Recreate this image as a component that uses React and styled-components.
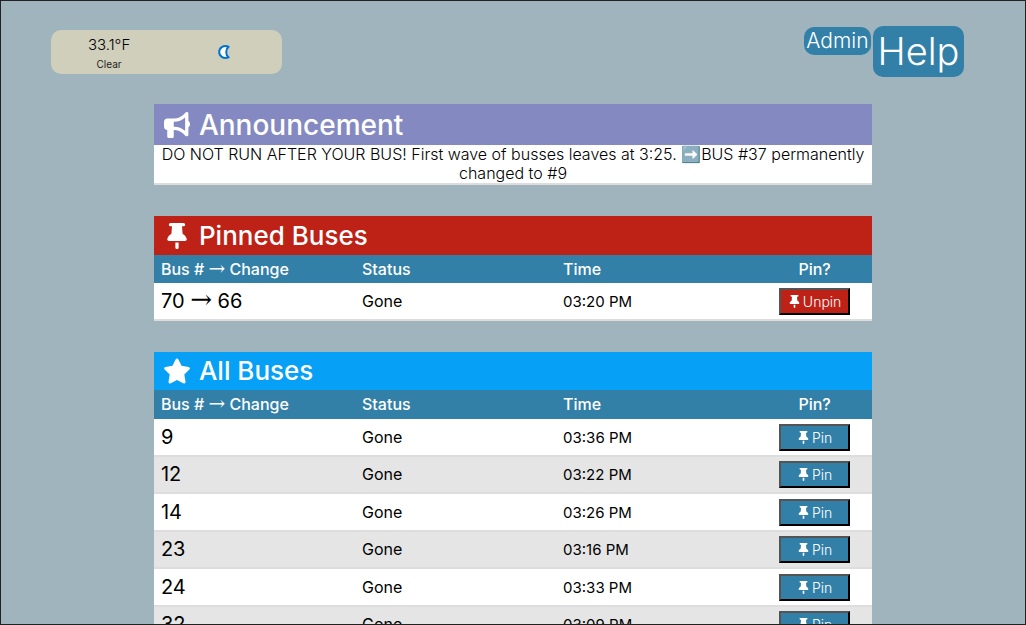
import React from "react";
import styled, { createGlobalStyle } from "styled-components";
import { FaBullhorn, FaThumbtack, FaStar } from "react-icons/fa6";

const steel = "#327fa8";
const red = "#be2116";

const GlobalStyle = createGlobalStyle`
  *, *::before, *::after { box-sizing: border-box; }
  body {
    margin: 0;
    background: #a0b4bd;
    color: #000;
    font-family: Inter, "Open Sans", sans-serif;
    font-size: 16px;
    line-height: 19px;
  }
`;

const Page = styled.div`
  height: 100vh;
  overflow-y: auto;
  scrollbar-width: none;
  outline: 1px solid #222;
  outline-offset: -1px;
`;

const TopBar = styled.header`
  display: flex;
  justify-content: space-between;
  align-items: flex-start;
  height: 79px;
  padding: 26px 6% 0 5%;
`;

const Weather = styled.section`
  display: grid;
  grid-template-columns: 1fr 1fr;
  align-items: center;
  justify-items: center;
  width: 26%;
  max-width: 231px;
  height: 44px;
  margin-top: 4px;
  border-radius: 10px;
  background: #d0cfbb;
`;

const Reading = styled.div`
  padding-top: 4px;
  text-align: center;
`;

const Temperature = styled.div`
  font-size: 15px;
  font-weight: 300;
  line-height: 20px;
`;

const Condition = styled.div`
  font-size: 10px;
  line-height: 18px;
  color: #222;
`;

const Nav = styled.nav`
  display: flex;
  align-items: flex-start;
  gap: 2px;
`;

const NavLink = styled.a`
  display: block;
  margin-top: ${(p) => (p.$large ? 0 : 1)}px;
  padding: ${(p) => (p.$large ? "0 5px" : "0 2px")};
  border-radius: 10px;
  background: ${steel};
  color: #fff;
  font-size: ${(p) => (p.$large ? 38 : 21)}px;
  font-weight: 300;
  line-height: ${(p) => (p.$large ? 51 : 28)}px;
  text-decoration: none;
`;

const Main = styled.main`
  display: flex;
  flex-direction: column;
  gap: 31px;
  width: 70%;
  min-width: 560px;
  margin: 25px auto 40px;
`;

const Panel = styled.section`
  background: #fff;
`;

const PanelTitle = styled.h2`
  display: flex;
  align-items: center;
  gap: 9px;
  height: ${(p) => p.$height}px;
  margin: 0;
  padding: 0 10px;
  background: ${(p) => p.$color};
  color: #fff;
  font-size: ${(p) => p.$size}px;
  font-weight: 500;
  line-height: 32px;
`;

const IconSlot = styled.span`
  display: flex;
  justify-content: center;
  width: 26px;

  svg { flex: none; }
`;

const Notice = styled.p`
  margin: 0;
  border-bottom: 2px solid #ddd;
  font-weight: 300;
  text-align: center;
`;

const Table = styled.table`
  width: 100%;
  table-layout: fixed;
  border-collapse: collapse;
`;

const HeadCell = styled.th`
  width: ${(p) => (p.$pin ? 16 : 28)}%;
  height: ${(p) => p.$height}px;
  padding: 0 7px;
  background: ${steel};
  color: #fff;
  font-weight: 500;
  text-align: ${(p) => (p.$pin ? "center" : "left")};
`;

const Row = styled.tr`
  height: 38px;
  background: #fff;
  box-shadow: inset 0 -2px #ddd;

  &:nth-child(even) {
    height: 37px;
    background: #e5e5e5;
  }
`;

const Cell = styled.td`
  padding: 0 7px 2px;
  font-size: 16px;
`;

const NumberCell = styled(Cell)`
  font-size: 20px;
`;

const TimeCell = styled(Cell)`
  font-size: 15px;
`;

const PinCell = styled(Cell)`
  text-align: center;
`;

const Arrow = styled.span`
  font-family: "DejaVu Serif", serif;
  font-size: ${(p) => (p.$large ? 26 : 20)}px;
  font-weight: 400;
  line-height: 0;
`;

const PinButton = styled.button`
  display: inline-flex;
  align-items: center;
  justify-content: center;
  gap: 2px;
  width: 71px;
  height: 27px;
  padding: 0;
  border: 2px outset #000;
  background: ${(p) => (p.$pinned ? red : steel)};
  color: #fff;
  font-family: inherit;
  font-size: 14px;
  font-weight: 300;
  vertical-align: middle;
`;

const MoonIcon = () => (
  <svg width="14" height="14" viewBox="0 0 14 14" role="img" aria-label="Night">
    <path
      d="M10.6 1.6C5 -0.2 1.2 3 1.2 7S5 14.2 10.6 12.4C7.4 9.8 7.4 4.2 10.6 1.6Z"
      fill="#fff"
      stroke="#0074d0"
      strokeWidth="2"
      strokeLinejoin="round"
    />
  </svg>
);

const pinned = [{ bus: "70", change: "66", status: "Gone", time: "03:20 PM" }];

const buses = [
  { bus: "9", status: "Gone", time: "03:36 PM" },
  { bus: "12", status: "Gone", time: "03:22 PM" },
  { bus: "14", status: "Gone", time: "03:26 PM" },
  { bus: "23", status: "Gone", time: "03:16 PM" },
  { bus: "24", status: "Gone", time: "03:33 PM" },
  { bus: "32", status: "Gone", time: "03:09 PM" },
];

const BusTable = ({ rows, isPinned, headHeight }) => (
  <Table>
    <thead>
      <tr>
        <HeadCell $height={headHeight}>
          Bus # <Arrow>→</Arrow> Change
        </HeadCell>
        <HeadCell $height={headHeight}>Status</HeadCell>
        <HeadCell $height={headHeight}>Time</HeadCell>
        <HeadCell $height={headHeight} $pin>Pin?</HeadCell>
      </tr>
    </thead>
    <tbody>
      {rows.map((row) => (
        <Row key={row.bus}>
          <NumberCell>
            {row.bus}
            {row.change && (
              <>
                {" "}
                <Arrow $large>→</Arrow> {row.change}
              </>
            )}
          </NumberCell>
          <Cell>{row.status}</Cell>
          <TimeCell>{row.time}</TimeCell>
          <PinCell>
            <PinButton type="button" $pinned={isPinned}>
              <FaThumbtack size={13} />
              {isPinned ? "Unpin" : "Pin"}
            </PinButton>
          </PinCell>
        </Row>
      ))}
    </tbody>
  </Table>
);

export default function App() {
  return (
    <>
      <GlobalStyle />
      <Page>
        <TopBar>
          <Weather>
            <Reading>
              <Temperature>33.1°F</Temperature>
              <Condition>Clear</Condition>
            </Reading>
            <MoonIcon />
          </Weather>
          <Nav>
            <NavLink href="#admin">Admin</NavLink>
            <NavLink href="#help" $large>Help</NavLink>
          </Nav>
        </TopBar>
        <Main>
          <Panel>
            <PanelTitle $color="#848ac1" $height={41} $size={28}>
              <IconSlot><FaBullhorn size={26} /></IconSlot>
              Announcement
            </PanelTitle>
            <Notice>
              DO NOT RUN AFTER YOUR BUS! First wave of busses leaves at 3:25. ➡️BUS #37 permanently changed to #9
            </Notice>
          </Panel>
          <Panel>
            <PanelTitle $color={red} $height={39} $size={26}>
              <IconSlot><FaThumbtack size={26} /></IconSlot>
              Pinned Buses
            </PanelTitle>
            <BusTable rows={pinned} isPinned headHeight={28} />
          </Panel>
          <Panel>
            <PanelTitle $color="#06a0f6" $height={38} $size={26}>
              <IconSlot><FaStar size={28} /></IconSlot>
              All Buses
            </PanelTitle>
            <BusTable rows={buses} headHeight={29} />
          </Panel>
        </Main>
      </Page>
    </>
  );
}
